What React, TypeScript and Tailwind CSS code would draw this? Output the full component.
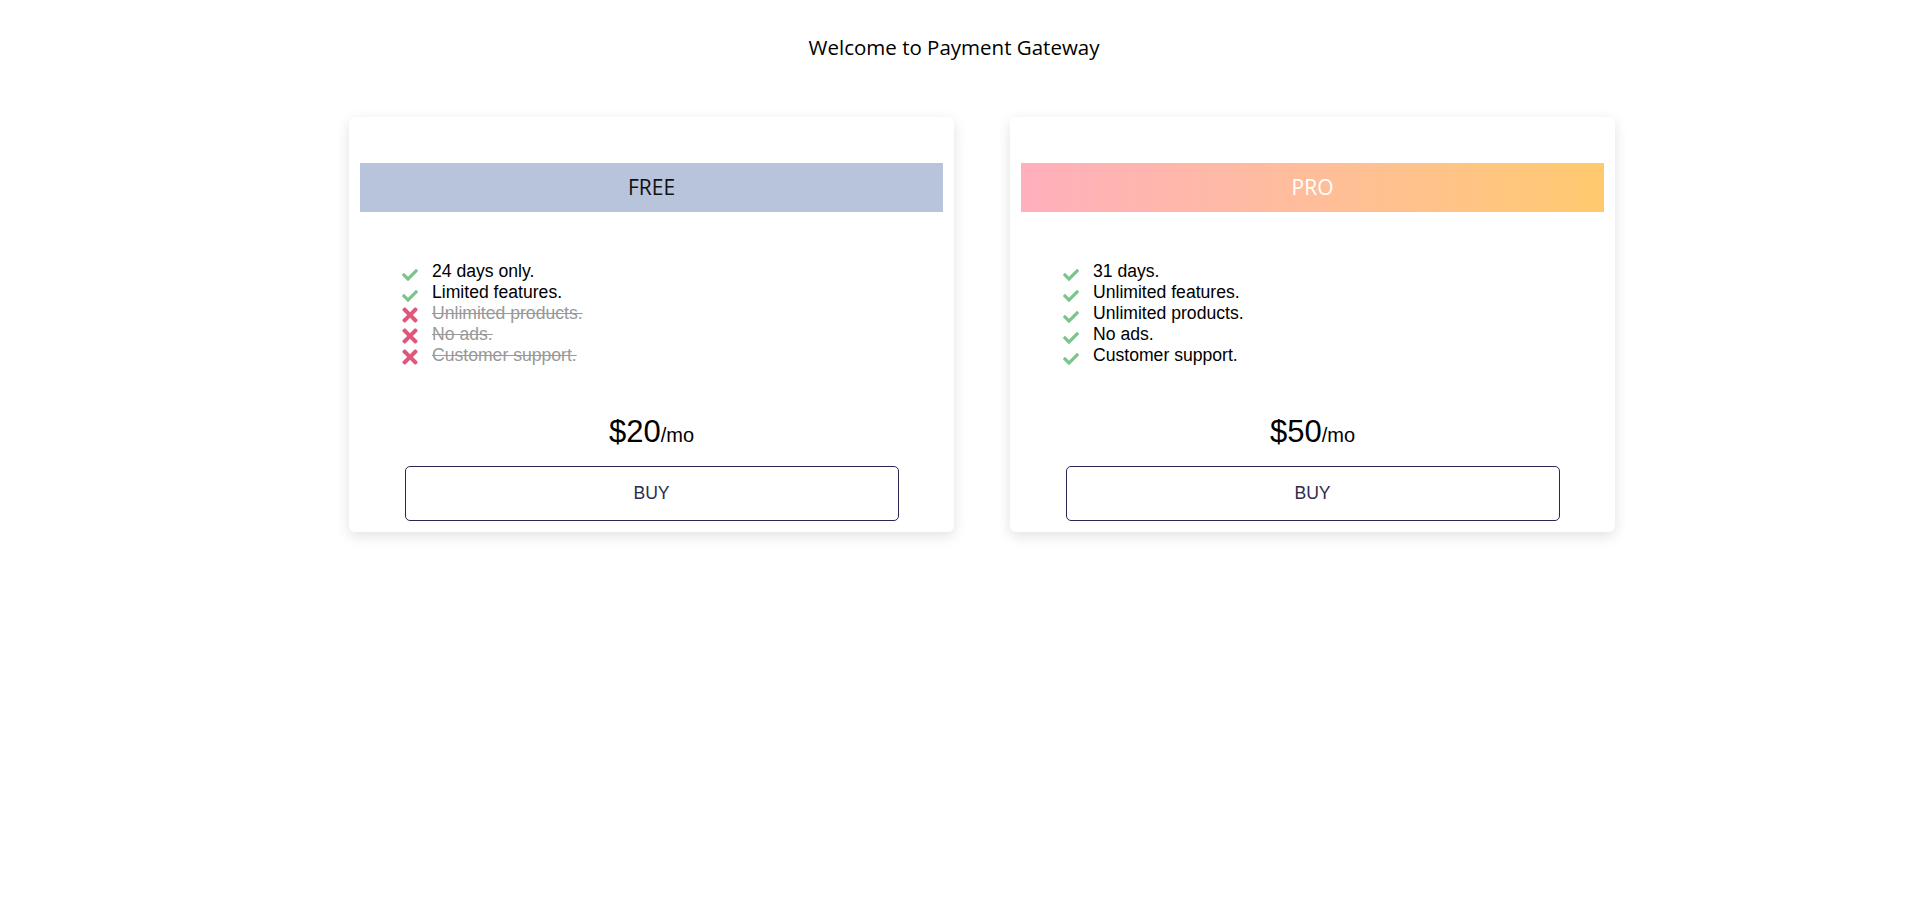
import { FaCheck, FaTimes } from "react-icons/fa"

type Feature = { text: string; ok: boolean }

const plans: { name: string; price: string; features: Feature[]; band: string }[] = [
  {
    name: "FREE",
    price: "$20",
    band: "bg-[#b8c4dc] text-[#111]",
    features: [
      { text: "24 days only.", ok: true },
      { text: "Limited features.", ok: true },
      { text: "Unlimited products.", ok: false },
      { text: "No ads.", ok: false },
      { text: "Customer support.", ok: false },
    ],
  },
  {
    name: "PRO",
    price: "$50",
    band: "bg-linear-to-r from-[#ffafbd] to-[#ffca6e] text-white",
    features: [
      { text: "31 days.", ok: true },
      { text: "Unlimited features.", ok: true },
      { text: "Unlimited products.", ok: true },
      { text: "No ads.", ok: true },
      { text: "Customer support.", ok: true },
    ],
  },
]

const PlanCard = ({ plan }: { plan: (typeof plans)[number] }) => {
  return (
    <div className="ml-[56px] w-[605px] rounded-md bg-white px-[11px] pt-[46px] pb-[11px] shadow-[0_4px_14px_rgba(0,0,0,0.12)]">
      <div
        className={`h-[49px] flex items-center justify-center text-[21px] font-['Open_Sans',sans-serif] ${plan.band}`}
      >
        {plan.name}
      </div>

      <ul className="mt-[49px] pl-[42px] font-['Liberation_Sans',Arial,sans-serif] text-[17.6px] leading-[21px]">
        {plan.features.map(({ text, ok }) => (
          <li key={text} className="flex">
            <span className="w-4 h-[21px] mr-[14px] flex items-end justify-center translate-y-[2px]">
              {ok ? (
                <FaCheck className="text-[#7bc58a]" style={{ width: 17, height: 18 }} />
              ) : (
                <FaTimes className="text-[#e0577a]" style={{ width: 17, height: 22 }} />
              )}
            </span>
            <span className={ok ? "text-black" : "text-[#999] line-through"}>{text}</span>
          </li>
        ))}
      </ul>

      <div className="mt-[49px] text-center leading-[34px] font-['Liberation_Sans',Arial,sans-serif] text-[31px] text-black">
        {plan.price}
        <span className="text-[20px] leading-none">/mo</span>
      </div>

      <button className="mt-[17px] mx-auto flex h-[55px] w-[494px] items-center justify-center rounded-[5px] border border-[#2a2850] bg-white font-['Liberation_Sans',Arial,sans-serif] text-[17.6px] text-[#2e2c4c]">
        BUY
      </button>
    </div>
  )
}

const App = () => {
  return (
    <div className="min-h-screen bg-white">
      <h1 className="pt-[34px] text-center font-['Open_Sans',sans-serif] text-[20.5px] leading-[27px] text-black">
        Welcome to Payment Gateway
      </h1>

      <div className="mt-[56px] flex justify-center">
        {plans.map((plan) => (
          <PlanCard key={plan.name} plan={plan} />
        ))}
      </div>
    </div>
  )
}

export default App
